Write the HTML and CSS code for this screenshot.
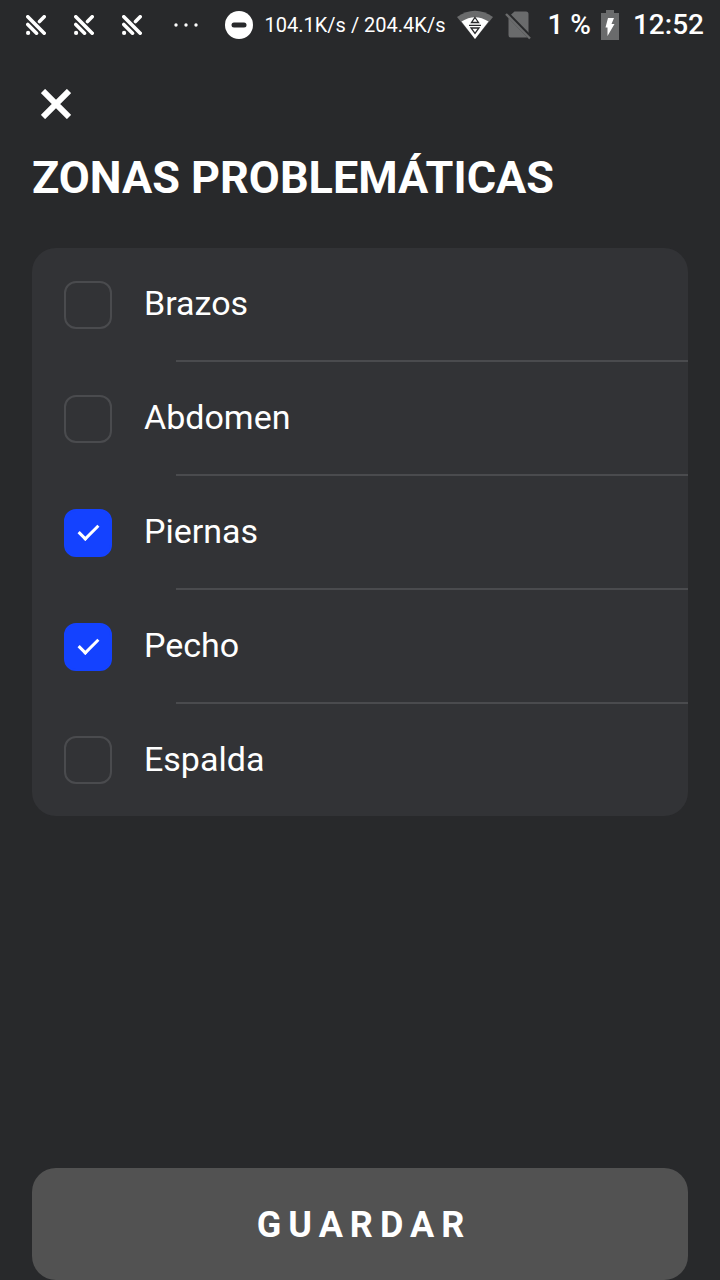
FILE: index.html
```html
<!DOCTYPE html>
<html lang="es">
<head>
    <meta charset="UTF-8">
    <meta name="viewport" content="width=device-width, initial-scale=1.0">
    <title>Zonas problemáticas</title>
    <link rel="stylesheet" href="styles.css">
</head>
<body>

<svg class="sprite" aria-hidden="true">
    <symbol id="tracks" viewBox="0 0 20 20">
        <path d="M1.800 1.800 18.200 18.200M1.800 9.500 10.500 18.200M18.200 1.800 13.500 6.500" fill="none" stroke="#fff" stroke-width="3.600" stroke-linecap="round"/>
        <circle cx="2.100" cy="17.900" r="2.100" fill="#fff"/>
    </symbol>
</svg>

<div class="status-bar">
    <div class="notifications">
        <svg class="track-icon"><use href="#tracks"/></svg>
        <svg class="track-icon"><use href="#tracks"/></svg>
        <svg class="track-icon"><use href="#tracks"/></svg>
        <svg class="dots-icon" viewBox="0 0 24 4" fill="#fff">
            <circle cx="2" cy="2" r="1.700"/>
            <circle cx="12" cy="2" r="1.700"/>
            <circle cx="22" cy="2" r="1.700"/>
        </svg>
    </div>
    <div class="system">
        <svg class="dnd-icon" viewBox="0 0 28 28">
            <circle cx="14" cy="14" r="14" fill="#fff"/>
            <rect x="6.500" y="11.500" width="15" height="5" rx="2.500" fill="#28292b"/>
        </svg>
        <span class="speed">104.1K/s / 204.4K/s</span>
        <svg class="wifi-icon" viewBox="0 0 36 30">
            <path d="M0 7Q18-5.500 36 7L18 29Z" fill="#6a6b6c"/>
            <path d="M4.500 11.500Q18 3 31.500 11.500L18 29Z" fill="#fff"/>
            <path d="M18 7.500 21.500 12.500H14.500ZM14 18H22L18 23.500ZM12 15.300H24" fill="none" stroke="#28292b" stroke-width="1.300"/>
        </svg>
        <svg class="sim-icon" viewBox="0 0 26 30">
            <path d="M9.500 1.500H21Q23.500 1.500 23.500 4V24L5 5.500ZM3.500 8 22.500 27.500H5.500Q3.500 27.500 3.500 25Z" fill="#6a6b6c"/>
            <path d="M2 2 26 26.500" stroke="#28292b" stroke-width="2"/>
            <path d="M1 4 25 28.500" stroke="#6a6b6c" stroke-width="2.400"/>
        </svg>
        <span class="level">1 %</span>
        <svg class="battery-icon" viewBox="0 0 18 30">
            <path d="M5 0H13V3H18V30H0V3H5Z" fill="#6a6b6c"/>
            <path d="M7 8H13L10.500 14H13.500L6.500 26V17.500H4.500Z" fill="#fff"/>
        </svg>
        <span class="clock">12:52</span>
    </div>
</div>

<main class="page">
    <button class="close" type="button" aria-label="Cerrar">
        <svg viewBox="0 0 30 30"><path d="M2 2 28 28M28 2 2 28" stroke="#fff" stroke-width="6"/></svg>
    </button>
    <h1>ZONAS PROBLEMÁTICAS</h1>

    <form class="zones-form">
        <div class="zones">
            <label class="zone">
                <input type="checkbox" name="zona" value="brazos">
                <span class="zone-name">Brazos</span>
            </label>
            <label class="zone">
                <input type="checkbox" name="zona" value="abdomen">
                <span class="zone-name">Abdomen</span>
            </label>
            <label class="zone">
                <input type="checkbox" name="zona" value="piernas" checked>
                <span class="zone-name">Piernas</span>
            </label>
            <label class="zone">
                <input type="checkbox" name="zona" value="pecho" checked>
                <span class="zone-name">Pecho</span>
            </label>
            <label class="zone">
                <input type="checkbox" name="zona" value="espalda">
                <span class="zone-name">Espalda</span>
            </label>
        </div>
        <button class="save" type="submit">GUARDAR</button>
    </form>
</main>

</body>
</html>
```
FILE: styles.css
```css
* {
    box-sizing: border-box;
    margin: 0;
    padding: 0;
}

body {
    display: flex;
    flex-direction: column;
    min-height: 100vh;
    background-color: #28292b;
    color: #fff;
    font-family: Roboto, "Liberation Sans", sans-serif;
}

svg {
    display: block;
    flex: none;
}

.sprite {
    position: absolute;
    width: 0;
    height: 0;
}

/* status bar */
.status-bar {
    display: flex;
    align-items: center;
    justify-content: space-between;
    height: 48px;
    padding: 2px 16px 0 26px;
    white-space: nowrap;
}

.notifications {
    display: flex;
    align-items: center;
    gap: 28px;
}

.track-icon {
    width: 20px;
    height: 20px;
}

.dots-icon {
    width: 24px;
    height: 4px;
    margin-left: 4px;
}

.system {
    display: flex;
    align-items: center;
    gap: 12px;
}

.dnd-icon {
    width: 28px;
    height: 28px;
}

.speed {
    font-size: 20px;
    line-height: 26px;
}

.wifi-icon {
    width: 36px;
    height: 30px;
}

.sim-icon {
    width: 26px;
    height: 30px;
}

.level,
.clock {
    font-size: 28px;
    font-weight: 500;
    line-height: 34px;
}

.level {
    margin-left: 4px;
}

.battery-icon {
    width: 18px;
    height: 30px;
    margin: 0 2px 0 -2px;
}

/* page */
.page {
    display: flex;
    flex: 1;
    flex-direction: column;
    padding: 32px 32px 0;
}

.close {
    display: flex;
    align-items: center;
    justify-content: center;
    width: 48px;
    height: 48px;
    border: none;
    background: none;
    cursor: pointer;
}

.close svg {
    width: 30px;
    height: 30px;
}

h1 {
    margin-top: 20px;
    font-size: 45px;
    font-weight: 700;
    line-height: 60px;
}

.zones-form {
    display: flex;
    flex: 1;
    flex-direction: column;
    justify-content: space-between;
    gap: 32px;
    margin-top: 40px;
}

.zones {
    border-radius: 24px;
    background-color: #323336;
}

.zone {
    position: relative;
    display: flex;
    align-items: center;
    gap: 32px;
    height: 114px;
    padding: 0 32px;
    cursor: pointer;
}

.zone:last-child {
    height: 112px;
}

.zone:not(:last-child)::after {
    content: "";
    position: absolute;
    right: 0;
    bottom: 0;
    left: 144px;
    height: 2px;
    background-color: #4a4b4e;
}

.zone input {
    display: flex;
    align-items: center;
    justify-content: center;
    width: 48px;
    height: 48px;
    border: 2px solid #4a4b4e;
    border-radius: 12px;
    appearance: none;
    cursor: pointer;
}

.zone input:checked {
    border-color: #1442ff;
    background-color: #1442ff;
}

.zone input:checked::after {
    content: "";
    box-sizing: border-box;
    width: 11px;
    height: 20px;
    margin-bottom: 6px;
    border: solid #fff;
    border-width: 0 3px 3px 0;
    transform: rotate(45deg);
}

.zone-name {
    align-self: flex-start;
    font-size: 34px;
    line-height: 110px;
}

.save {
    height: 112px;
    padding: 2px 0 0 8px;
    border: none;
    border-radius: 24px;
    background-color: #525252;
    color: #fff;
    font-family: inherit;
    font-size: 36px;
    font-weight: 700;
    letter-spacing: 7px;
    cursor: pointer;
}
```
